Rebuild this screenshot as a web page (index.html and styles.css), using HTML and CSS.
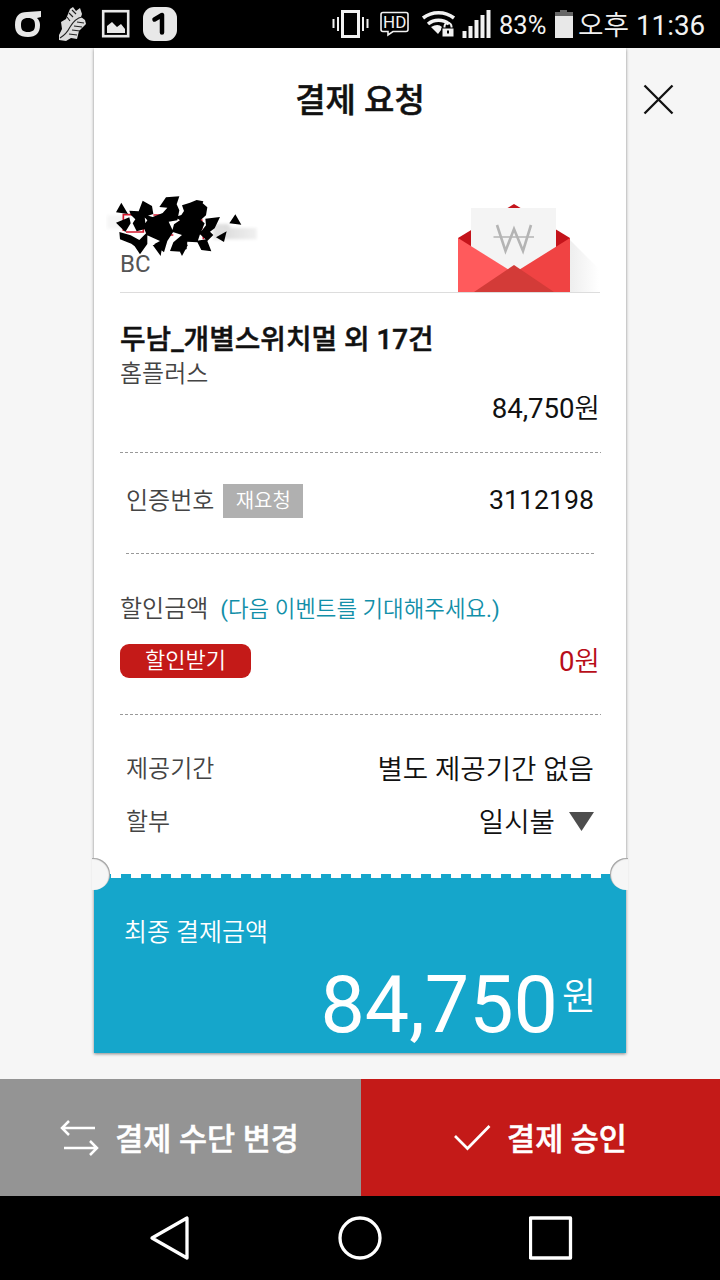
FILE: index.html
```html
<!DOCTYPE html>
<html lang="ko">
<head>
    <meta charset="UTF-8">
    <meta name="viewport" content="width=device-width, initial-scale=1.0">
    <title>결제 요청</title>
    <link rel="stylesheet" href="styles.css">
</head>
<body>
    <div class="status-bar">
        <svg class="status-left" width="180" height="48" viewBox="0 0 180 48">
            <path fill="#e8e8e8" fill-rule="evenodd" d="M41 11v6l-4 1c2 2 3 4 3 7 0 8-4 12-12 12-9 0-13-4-13-12 0-9 4-13 12-13zM28 18c-5 0-7 2-7 7s2 7 7 7 7-2 7-7-2-7-7-7z"/>
            <path fill="#dcdcdc" d="M70 9l3-2 3 4 4-3 2 6-1 3 4 3 1 4-3 3-4 4-2 8-6-1-5 3-7-1v-5l3-6-1-7 5-3z"/>
            <path d="M82 17c-6 1-9 5-12 10-3 6-5 8-10 11M72 10l4 4M69 13l4 4M67 17l3 4M77 22l7 1M74 26l8 1M72 30l8 1M69 34l8 1" fill="none" stroke="#222" stroke-width="1.100"/>
            <rect x="103.200" y="11.200" width="25" height="25" fill="none" stroke="#e8e8e8" stroke-width="2.600"/>
            <path fill="#e8e8e8" d="M107 33v-7l5-4 5 5 4-3 4 5v4z"/>
            <rect x="143" y="7" width="34" height="34" rx="11" fill="#e8e8e8"/>
            <path d="M154.500 19.500l7.500-4.500v17.500" fill="none" stroke="#000" stroke-width="4.500" stroke-linecap="round" stroke-linejoin="round"/>
        </svg>
        <div class="status-right">
            <svg width="166" height="48" viewBox="330 0 166 48">
                <g fill="none" stroke="#f2f2f2" stroke-width="2">
                    <rect x="342.500" y="11.500" width="16" height="25" stroke-width="3"/>
                    <path d="M333.500 19v9M338 17v14M363 17v14M367.500 19v9"/>
                    <path d="M383 12.500h23a2 2 0 0 1 2 2v15a2 2 0 0 1-2 2h-13l-5 3.500v-3.500h-5a2 2 0 0 1-2-2v-15a2 2 0 0 1 2-2z" stroke-width="1.600"/>
                    <path d="M423 18c9-7 22-7 31 0M428 24c6-5 15-5 21 0" stroke-width="3.500"/>
                </g>
                <text x="383" y="28" class="hd">HD</text>
                <path fill="#f2f2f2" d="M431 27q7-4 11 0l-1 3-3 4-4-4z"/>
                <path d="M444.500 29v-2.500a3.500 3.500 0 0 1 7 0v2.500" fill="none" stroke="#f2f2f2" stroke-width="2"/>
                <rect x="442" y="28" width="12" height="9" fill="#f2f2f2" stroke="#000" stroke-width="1"/>
                <path stroke="#000" stroke-width="2" d="M448 30.500v3"/>
                <path fill="#f2f2f2" d="M462.500 31h4v7h-4zM468.500 26h4v12h-4zM474.500 20h4v18h-4zM480.500 15h4v23h-4zM486.500 10h4v28h-4z"/>
            </svg>
            <span class="battery-text">83%</span>
            <svg width="20" height="48" viewBox="0 0 20 48">
                <path fill="#666" d="M6 10h7v2h6v4H1v-4h5z"/>
                <path fill="#e8e8e8" d="M1 16h18v22H1z"/>
            </svg>
            <span class="clock">오후 <span class="num">11:36</span></span>
        </div>
    </div>

    <div class="main">
        <div class="ticket">
            <h1 class="title">결제 요청</h1>

            <div class="card-info">
                <div class="card-name">
                    <svg class="scribble" width="155" height="64" viewBox="48 39 465 192">
                        <defs>
                            <linearGradient id="smudge">
                                <stop offset="0" stop-color="#f7f7f7"/>
                                <stop offset=".8" stop-color="#dedede"/>
                                <stop offset="1" stop-color="#f0f0f0"/>
                            </linearGradient>
                            <filter id="soft"><feGaussianBlur stdDeviation="5"/></filter>
                        </defs>
                        <path fill="url(#smudge)" filter="url(#soft)" d="M50 106h60v40H50zM370 132h45l8 12h77v34H370z"/>
                        <path fill="none" stroke="#d5172c" stroke-width="5" d="M100 153v-49h60v52h-52M190 105h25v60h35M290 110l-30 22M285 160h55v18M335 118v30"/>
                        <path d="M94 68l20 34-36-5zM158 62l28 16 4 24-26 8 4 36-28 8-12-24 8-12-14-14-4-12 28 2zM228 52l40-3-8 24 8 18-6 30-26 4 14 30-18 28-10 34-30-24 18-10-40-18-10-26 12-18-18-20 34 10 30-12 14-16-24-2zM78 128l40-16 4 18-16 26zM88 156l34 10 26 14 24-24v36l-22 31-16-24-10-8-34-13zM188 195l30-4-6 37zM276 76l24-8 20-8 20 4-2 6 14 12-4 24-16 14 12 10-10 24 14-18-2-20 44-5-16 34-14 10 10 10-18 18-22-20-8 24-30-2-2 22-16 8-34-2 10-26 26-22-30-10 6-22 18-12-14-10 18-6 8-12zM260 196l34-2-18 34zM320 182l30-4 14 36-30-4zM378 172l32-18-8 32zM436 103l18 31-36-4z"/>
                    </svg>
                    <span class="label card-brand">BC</span>
                </div>
                <svg class="envelope" width="148" height="92" viewBox="452 200 148 92">
                    <defs>
                        <linearGradient id="shade">
                            <stop offset="0" stop-color="#eee"/>
                            <stop offset="1" stop-color="#fff"/>
                        </linearGradient>
                    </defs>
                    <path fill="url(#shade)" d="M570 240l29 29v23h-29z"/>
                    <path fill="#c4141b" d="M458 238l56-34 56 34v54H458z"/>
                    <path fill="#f4f4f4" d="M471 208h85v64h-85z"/>
                    <path fill="#ff5a5c" d="M458 238l56 35v19h-56z"/>
                    <path fill="#f04343" d="M570 238l-56 35v19h56z"/>
                    <path fill="#d33b38" d="M474 292l40-27 40 27z"/>
                    <path fill="none" stroke="#b4b4b4" stroke-width="2.600" d="M497 225l8.500 26 8.500-22 9 22 8-26"/>
                    <path fill="none" stroke="#b4b4b4" stroke-width="1.300" d="M493.500 237h40.500"/>
                </svg>
            </div>

            <div class="product">
                <div class="product-name">두남_개별스위치멀 외 17건</div>
                <div class="label">홈플러스</div>
                <div class="value price"><span class="num">84,750</span>원</div>
            </div>

            <div class="auth">
                <span class="label">인증번호</span>
                <button class="retry-btn">재요청</button>
                <span class="value auth-code num">3112198</span>
            </div>

            <div class="discount">
                <div class="discount-head">
                    <span class="label">할인금액</span>
                    <span class="event"><span class="num">(</span>다음 이벤트를 기대해주세요<span class="num">.)</span></span>
                </div>
                <div class="discount-row">
                    <button class="discount-btn">할인받기</button>
                    <span class="value discount-value"><span class="num">0</span>원</span>
                </div>
            </div>

            <div class="terms">
                <div class="term">
                    <span class="label">제공기간</span>
                    <span class="value">별도 제공기간 없음</span>
                </div>
                <div class="term">
                    <span class="label">할부</span>
                    <span class="value select">일시불
                        <svg width="26" height="22" viewBox="0 0 26 22"><path fill="#4d4d4d" d="M1 0h25L13.500 19z"/></svg>
                    </span>
                </div>
            </div>

            <div class="total">
                <span class="notch notch-left"></span>
                <span class="notch notch-right"></span>
                <div class="total-label">최종 결제금액</div>
                <div class="total-value"><span class="amount">84,750</span><span class="won">원</span></div>
            </div>
        </div>
        <button class="close-btn" aria-label="닫기">
            <svg width="32" height="32" viewBox="0 0 32 32"><path d="M1.500 1.500l28 28M29.500 1.500l-28 28" fill="none" stroke="#111" stroke-width="2.300"/></svg>
        </button>
    </div>

    <div class="actions">
        <button class="action change">
            <svg width="40" height="36" viewBox="0 0 40 36"><path d="M36 8H3M10 1L3 8l7 7M5 28h33M31 21l7 7-7 7" fill="none" stroke="#fff" stroke-width="2.500"/></svg>
            <span>결제 수단 변경</span>
        </button>
        <button class="action approve">
            <svg width="38" height="28" viewBox="0 0 38 28"><path d="M2 12l12.500 12.500L36.500 2" fill="none" stroke="#fff" stroke-width="2.700"/></svg>
            <span>결제 승인</span>
        </button>
    </div>

    <div class="nav-bar">
        <svg width="44" height="48" viewBox="0 0 44 48"><path d="M40 4v40L5 24z" fill="none" stroke="#fff" stroke-width="3.300" stroke-linejoin="round"/></svg>
        <svg width="46" height="48" viewBox="0 0 46 48"><circle cx="23" cy="24" r="20" fill="none" stroke="#fff" stroke-width="3.300"/></svg>
        <svg width="44" height="48" viewBox="0 0 44 48"><rect x="1.500" y="4" width="40" height="40" fill="none" stroke="#fff" stroke-width="3.300" stroke-linejoin="round"/></svg>
    </div>
</body>
</html>
```

FILE: styles.css
```css
* {
    box-sizing: border-box;
}

body {
    margin: 0;
    width: 720px;
    height: 1280px;
    display: flex;
    flex-direction: column;
    overflow: hidden;
    background: #f6f6f6;
    color: #111;
    font-family: Roboto, "Noto Sans CJK KR", sans-serif;
}

svg {
    display: block;
    flex-shrink: 0;
}

button {
    border: none;
    padding: 0;
    font-family: inherit;
    color: #fff;
    cursor: pointer;
}

/* status bar */
.status-bar {
    height: 48px;
    display: flex;
    justify-content: space-between;
    background: #000;
    color: #f2f2f2;
}

.status-right {
    display: flex;
    align-items: center;
    padding-right: 14px;
    line-height: 48px;
    white-space: nowrap;
}

.hd {
    font-size: 17px;
    fill: #f2f2f2;
}

.battery-text {
    width: 58px;
    padding: 2px 0 0 3px;
    font-size: 25.5px;
}

.clock {
    width: 132px;
    padding: 3px 0 0 4px;
    font-size: 27.8px;
    font-weight: 350;
}

/* ticket */
.main {
    height: 1031px;
    display: grid;
    grid-template-columns: 94px 532px 94px;
}

.ticket {
    grid-column: 2;
    height: 1005px;
    background: #fff;
    box-shadow: 0 1px 3px rgba(0, 0, 0, 0.45);
}

.title {
    margin: 0;
    height: 104px;
    line-height: 106px;
    font-size: 33px;
    font-weight: 500;
    -webkit-text-stroke: 0.5px;
    text-align: center;
}

.label {
    font-size: 24px;
    line-height: 34px;
    font-weight: 350;
    color: #444;
}

.value {
    font-size: 27.6px;
    line-height: 40px;
    font-weight: 350;
}

.card-info {
    height: 141px;
    margin: 0 26px;
    display: flex;
    justify-content: space-between;
    align-items: flex-end;
    border-bottom: 1px solid #ddd;
}

.card-name {
    display: flex;
    flex-direction: column;
    padding-bottom: 11px;
}

.scribble {
    margin: 0 0 -10px -14px;
}

.card-brand {
    font-weight: 400;
    color: #555;
}

.product, .auth, .discount {
    background: repeating-linear-gradient(90deg, #999 0 3px, transparent 3px 5px) bottom / 100% 1px no-repeat;
}

.product {
    height: 160px;
    margin: 0 25px 0 26px;
    padding-top: 27px;
}

.product-name {
    font-size: 27.8px;
    line-height: 40px;
    font-weight: 500;
    -webkit-text-stroke: 0.5px;
    margin-bottom: -3px;
}

.price {
    margin-top: -2px;
    padding-right: 1px;
    text-align: right;
}

.auth {
    height: 101px;
    margin: 0 32px;
    padding-bottom: 6px;
    display: flex;
    align-items: center;
}

.retry-btn {
    width: 80px;
    height: 34px;
    margin-left: 9px;
    background: #b0b0b0;
    font-size: 20px;
    line-height: 34px;
    font-weight: 350;
}

.auth-code {
    margin-left: auto;
    font-size: 26.7px;
    line-height: 38px;
    padding-bottom: 2px;
}

/* latin digits stay regular next to the lighter hangul */
.num {
    font-weight: 400;
}

.discount {
    height: 161px;
    margin: 0 25px 0 26px;
    padding-top: 38px;
}

.discount-head {
    display: flex;
    align-items: center;
}

.event {
    margin-left: 12px;
    font-size: 22.4px;
    line-height: 34px;
    font-weight: 350;
    color: #128fa9;
}

.discount-row {
    display: flex;
    justify-content: space-between;
    align-items: center;
    margin-top: 15px;
}

.discount-btn {
    width: 131px;
    height: 34px;
    border-radius: 9px;
    background: #c41a18;
    font-size: 22px;
    line-height: 32px;
    font-weight: 350;
}

.discount-value {
    padding: 2px 1px 0 0;
    line-height: 38px;
    color: #b80e19;
}

.terms {
    height: 159px;
    padding: 27px 32px 0;
}

.term {
    height: 53px;
    display: flex;
    justify-content: space-between;
    align-items: center;
}

.term .value {
    padding-top: 2px;
}

.select {
    display: flex;
    align-items: center;
    gap: 13px;
}

.total {
    position: relative;
    height: 179px;
    padding: 41px 30px 0;
    background:
        repeating-linear-gradient(90deg, #15a6cb 0 6px, #fff 6px 16px, #15a6cb 16px 20px) -9px 0 / 560px 4px no-repeat,
        #15a6cb;
    color: #fff;
}

/* half circles punched out of both edges */
.notch {
    position: absolute;
    top: -16px;
    width: 18px;
    height: 32px;
    background: #f6f6f6;
}

.notch-left {
    left: -2px;
    border-radius: 0 16px 16px 0;
    box-shadow: inset -1px 1px 1px rgba(0, 0, 0, 0.35);
}

.notch-right {
    right: -2px;
    border-radius: 16px 0 0 16px;
    box-shadow: inset 1px 1px 1px rgba(0, 0, 0, 0.35);
}

.total-label {
    font-size: 25px;
    line-height: 36px;
    font-weight: 350;
}

.total-value {
    display: flex;
    justify-content: flex-end;
    align-items: flex-start;
}

.amount {
    font-size: 79px;
    line-height: 109px;
}

.won {
    margin-left: 4px;
    font-size: 37px;
    line-height: 94px;
    font-weight: 350;
}

.close-btn {
    width: 32px;
    height: 32px;
    margin: 36px 0 0 17px;
    background: none;
}

/* bottom buttons */
.actions {
    height: 117px;
    display: flex;
}

.action {
    display: flex;
    align-items: center;
    justify-content: center;
    font-size: 30.5px;
    font-weight: 500;
    -webkit-text-stroke: 0.5px;
}

.action span {
    padding-bottom: 2px;
}

.change {
    width: 361px;
    padding-right: 3px;
    gap: 16px;
    background: #949494;
}

.approve {
    width: 359px;
    padding-right: 1px;
    gap: 16px;
    background: #c41a18;
}

.nav-bar {
    height: 84px;
    padding: 0 147px;
    display: flex;
    justify-content: space-between;
    align-items: center;
    background: #000;
}
```
